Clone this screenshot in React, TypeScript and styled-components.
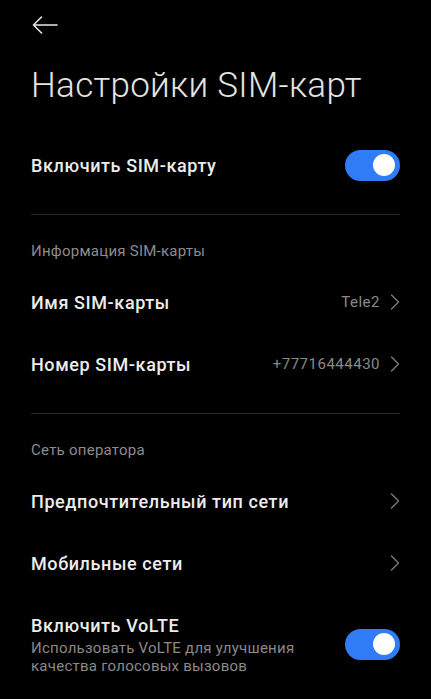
import styled, { createGlobalStyle } from "styled-components";

const GlobalStyle = createGlobalStyle`
    html, body {
        margin: 0;
        padding: 0;
        background: #000000;
    }
    body {
        font-family: Roboto, "Noto Sans", "Liberation Sans", sans-serif;
        -webkit-font-smoothing: antialiased;
    }
`;

const Screen = styled.div`
    width: 431px;
    min-height: 699px;
    background: #000000;
    color: #ececec;
    padding: 0 31px;
    box-sizing: border-box;
    overflow: hidden;
`;

const Header = styled.div`
    height: 50px;
    display: flex;
    align-items: center;
`;

const BackButton = styled.button`
    background: none;
    border: none;
    padding: 0;
    margin-left: 1px;
    display: flex;
    align-items: center;
    color: #e6e6e6;
    cursor: pointer;
`;

const Title = styled.h1`
    margin: 14px 0 0;
    font-size: 35px;
    line-height: 44px;
    font-weight: 300;
    color: #e4e4e4;
    letter-spacing: 0.3px;
`;

const Row = styled.div`
    height: 62px;
    display: flex;
    align-items: center;
    justify-content: space-between;
`;

const FirstRow = styled(Row)`
    margin-top: 26px;
`;

const Label = styled.span`
    font-size: 18px;
    font-weight: 500;
    letter-spacing: 0.6px;
    color: #ececec;
`;

const Value = styled.span`
    display: flex;
    align-items: center;
    gap: 10px;
    font-size: 15px;
    letter-spacing: 0.5px;
    color: #8a8a8a;
`;

const Divider = styled.hr`
    margin: 18px 0 0;
    border: none;
    height: 1px;
    background: #262626;
`;

const SectionHeader = styled.div`
    margin-top: 16px;
    height: 40px;
    display: flex;
    align-items: center;
    font-size: 15px;
    letter-spacing: 0.25px;
    color: #8c8c8c;
`;

const SwitchRow = styled.div`
    padding-top: 19px;
    display: flex;
    align-items: center;
    justify-content: space-between;
`;

const TextBlock = styled.div`
    max-width: 285px;
    display: flex;
    flex-direction: column;
`;

const RowTitle = styled.span`
    font-size: 18px;
    font-weight: 500;
    line-height: 26px;
    letter-spacing: 0.6px;
    color: #ececec;
`;

const RowSubtitle = styled.span`
    font-size: 15px;
    line-height: 18px;
    letter-spacing: 0.25px;
    color: #8a8a8a;
`;

const Track = styled.div<{ $on: boolean }>`
    width: 55px;
    height: 31px;
    border-radius: 16px;
    background: ${(p) => (p.$on ? "#2f7cf6" : "#3a3a3a")};
    display: flex;
    align-items: center;
    justify-content: ${(p) => (p.$on ? "flex-end" : "flex-start")};
    padding: 0 5px;
    box-sizing: border-box;
    flex-shrink: 0;
`;

const Knob = styled.div`
    width: 22px;
    height: 22px;
    border-radius: 50%;
    background: #ffffff;
`;

function Toggle({ on }: { on: boolean }) {
    return (
        <Track $on={on}>
            <Knob />
        </Track>
    );
}

function Chevron() {
    return (
        <svg width="10" height="16" viewBox="0 0 10 16" fill="none">
            <polyline
                points="1.5,1 8.5,8 1.5,15"
                stroke="#7a7a7a"
                strokeWidth="1.4"
                strokeLinecap="round"
                strokeLinejoin="round"
            />
        </svg>
    );
}

function BackArrow() {
    return (
        <svg width="26" height="18" viewBox="0 0 26 18" fill="none">
            <path
                d="M25 9H1.5M9.5 1L1.5 9L9.5 17"
                stroke="currentColor"
                strokeWidth="1.6"
                strokeLinecap="round"
                strokeLinejoin="round"
            />
        </svg>
    );
}

function LinkRow({ label, value }: { label: string; value?: string }) {
    return (
        <Row>
            <Label>{label}</Label>
            <Value>
                {value}
                <Chevron />
            </Value>
        </Row>
    );
}

export default function App() {
    return (
        <>
            <GlobalStyle />
            <Screen>
                <Header>
                    <BackButton aria-label="Назад">
                        <BackArrow />
                    </BackButton>
                </Header>
                <Title>Настройки SIM-карт</Title>

                <FirstRow>
                    <Label>Включить SIM-карту</Label>
                    <Toggle on />
                </FirstRow>

                <Divider />
                <SectionHeader>Информация SIM-карты</SectionHeader>
                <LinkRow label="Имя SIM-карты" value="Tele2" />
                <LinkRow label="Номер SIM-карты" value="+77716444430" />

                <Divider />
                <SectionHeader>Сеть оператора</SectionHeader>
                <LinkRow label="Предпочтительный тип сети" />
                <LinkRow label="Мобильные сети" />

                <SwitchRow>
                    <TextBlock>
                        <RowTitle>Включить VoLTE</RowTitle>
                        <RowSubtitle>
                            Использовать VoLTE для улучшения качества голосовых
                            вызовов
                        </RowSubtitle>
                    </TextBlock>
                    <Toggle on />
                </SwitchRow>
            </Screen>
        </>
    );
}
